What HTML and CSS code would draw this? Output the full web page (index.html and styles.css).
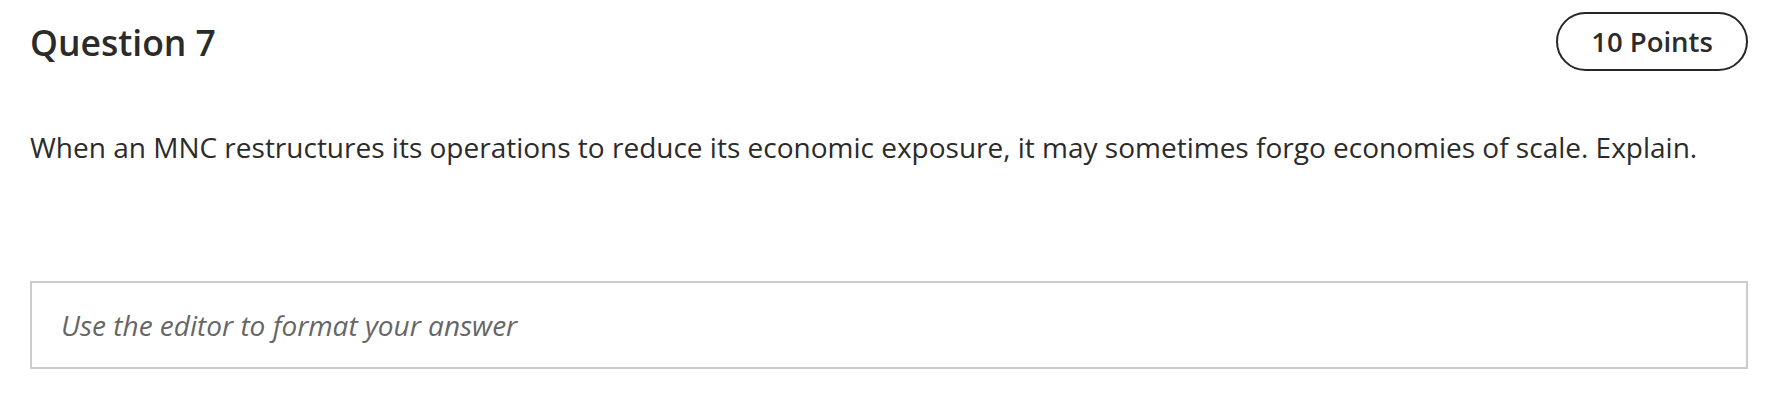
FILE: index.html
```html
<!DOCTYPE html>
<html lang="en">
<head>
<meta charset="utf-8">
<title>Question 7</title>
<link rel="stylesheet" href="styles.css">
</head>
<body>
<div class="question">
  <div class="question-header">
    <h2 class="question-title">Question 7</h2>
    <span class="points-badge">10 Points</span>
  </div>
  <p class="question-text">When an MNC restructures its operations to reduce its economic exposure, it may sometimes forgo economies of scale. Explain.</p>
  <div class="answer-box">
    <span class="answer-placeholder">Use the editor to format your answer</span>
  </div>
</div>
</body>
</html>
```
FILE: styles.css
```css
html, body {
  margin: 0;
  padding: 0;
  background: #ffffff;
}
body {
  font-family: "Open Sans", "Noto Sans", sans-serif;
  color: #2b2b2b;
}
.question {
  padding: 12px 36px 0 30px;
}
.question-header {
  display: flex;
  justify-content: space-between;
  align-items: center;
}
.question-title {
  margin: 0;
  font-size: 35.5px;
  font-weight: 600;
  line-height: 50px;
  color: #2b2b2b;
}
.points-badge {
  box-sizing: border-box;
  height: 59px;
  width: 192px;
  border: 2px solid #262626;
  border-radius: 30px;
  display: flex;
  align-items: center;
  justify-content: center;
  font-size: 27.5px;
  font-weight: 600;
  color: #2b2b2b;
}
.question-text {
  margin: 56px 0 0;
  font-size: 28px;
  line-height: 40px;
  color: #2b2b2b;
}
.answer-box {
  box-sizing: border-box;
  margin-top: 114px;
  height: 88px;
  border: 2px solid #cccccc;
  display: flex;
  align-items: center;
  padding-left: 29px;
}
.answer-placeholder {
  font-size: 28px;
  font-style: italic;
  color: #666666;
}
```
